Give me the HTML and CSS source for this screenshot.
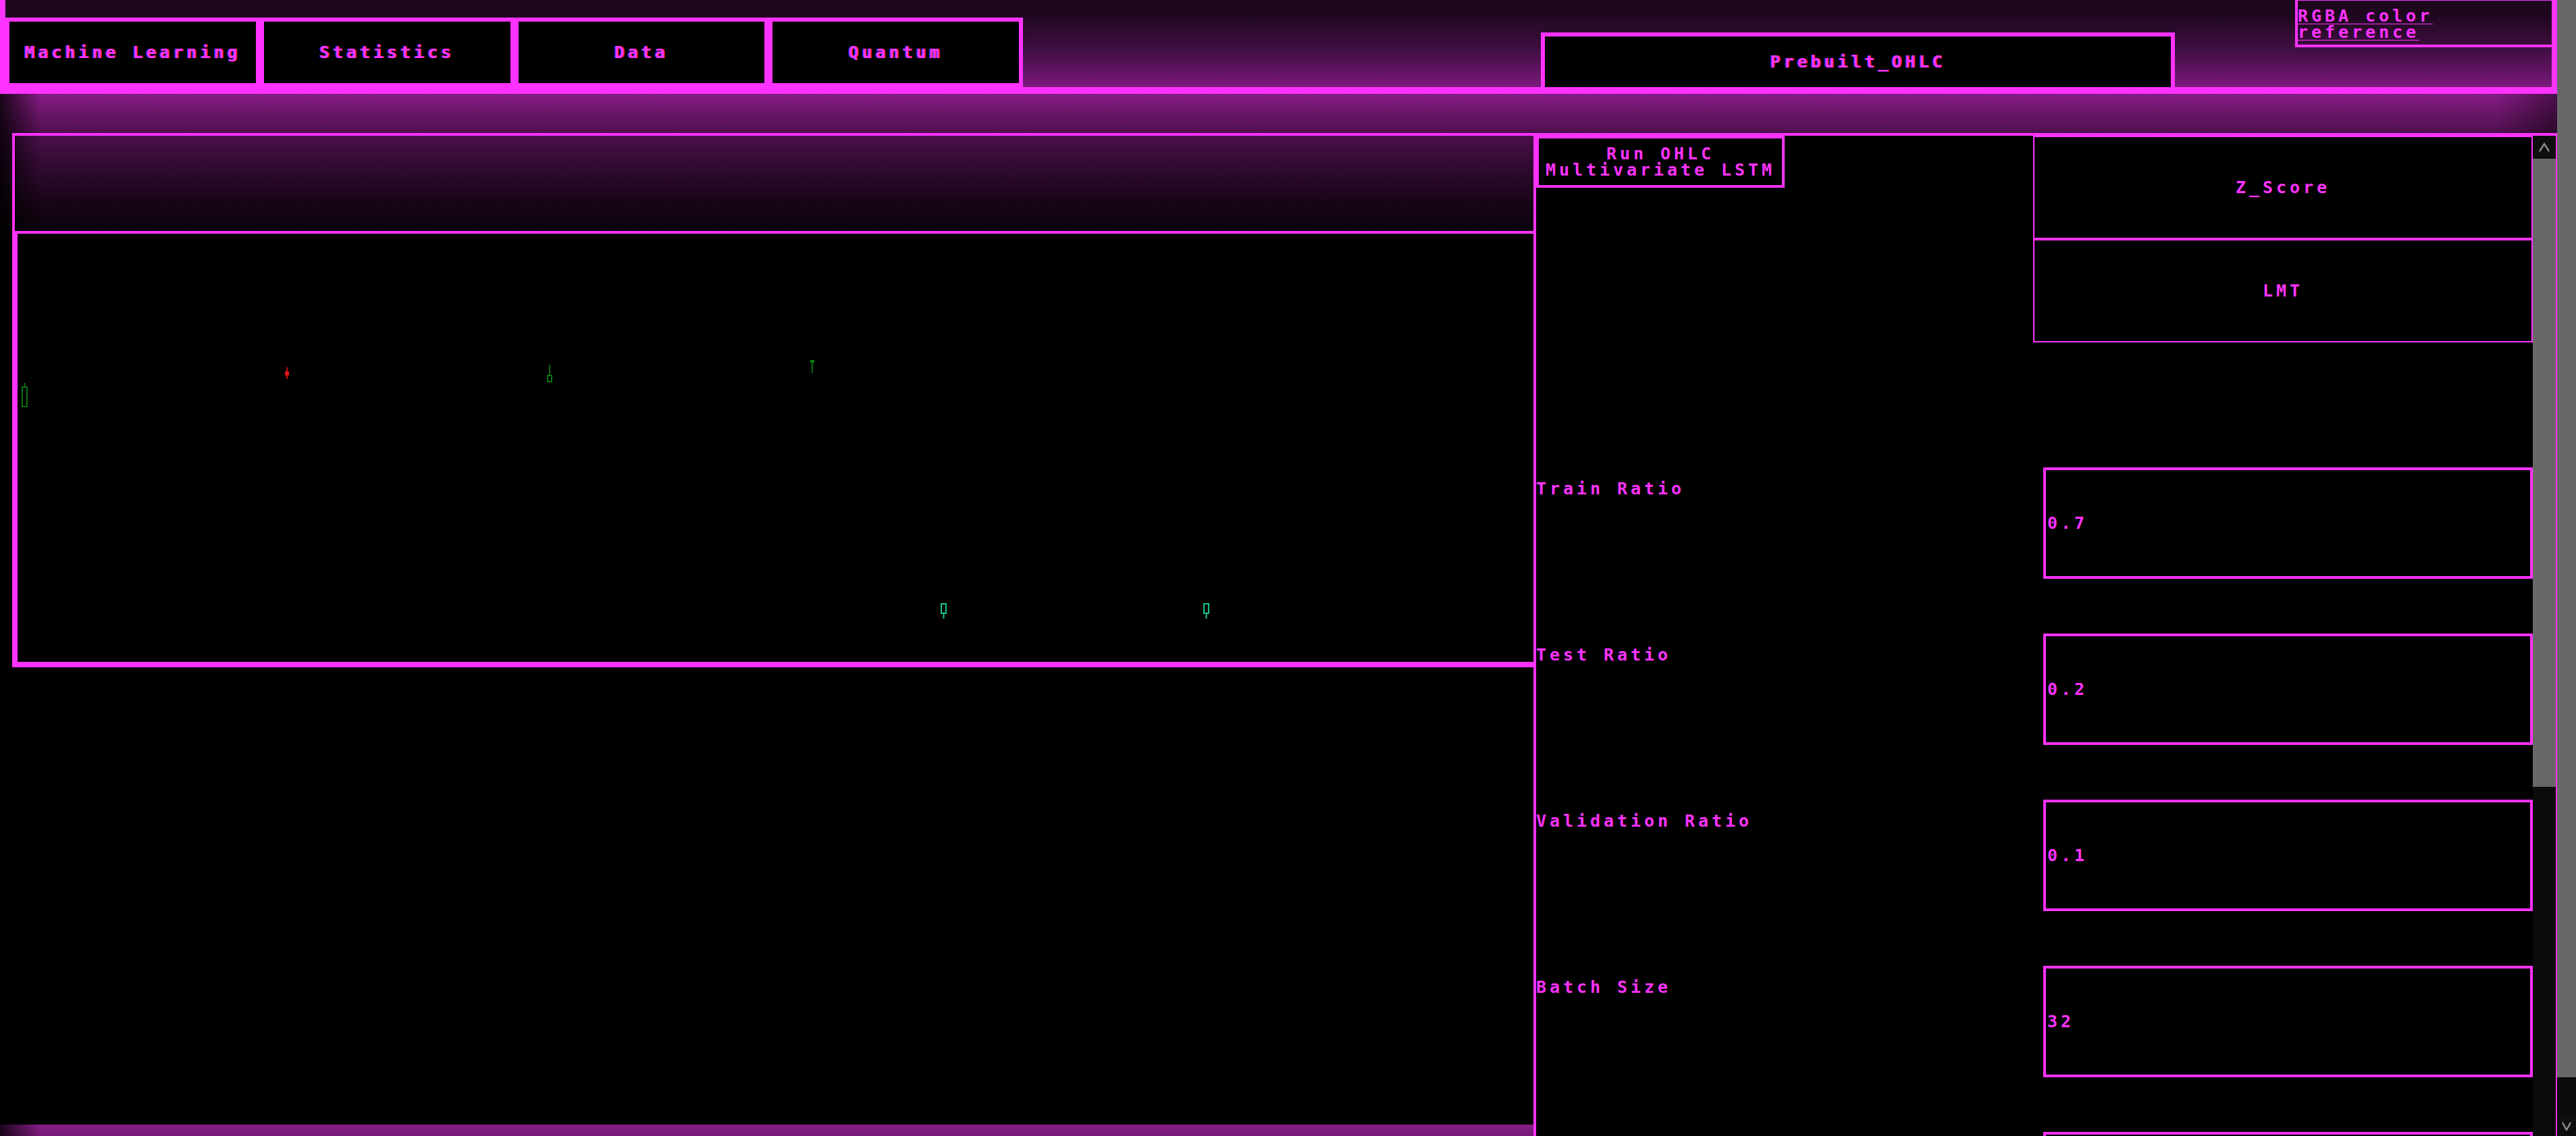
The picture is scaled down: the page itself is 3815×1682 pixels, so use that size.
FILE: index.html
```html
<!DOCTYPE html>
<html lang="en">
<head>
<meta charset="utf-8">
<title>OHLC Workbench</title>
<link rel="stylesheet" href="styles.css">
</head>
<body>
<div class="page">
  <header class="topbar">
    <nav class="tabs">
      <button class="tab">Machine Learning</button>
      <button class="tab">Statistics</button>
      <button class="tab">Data</button>
      <button class="tab">Quantum</button>
    </nav>
    <button class="preset">Prebuilt_OHLC</button>
    <div class="ref-box"><a href="#">RGBA color reference</a></div>
  </header>
  <main class="workspace">
    <section class="chart-panel">
      <div class="chart-head"></div>
      <div class="chart-canvas">
        <svg class="chart" viewBox="0 0 2245 634" width="2245" height="634">
          <g fill="none" stroke="#0c7c14" stroke-width="1.8">
            <line x1="10.5" y1="221" x2="10.5" y2="227"/>
            <rect x="7" y="227" width="7" height="29"/>
            <line x1="788" y1="194" x2="788" y2="210"/>
            <rect x="785" y="210" width="6" height="9"/>
            <line x1="1177" y1="190" x2="1177" y2="206"/>
          </g>
          <rect x="1174" y="187" width="6" height="4" fill="#0c7c14"/>
          <line x1="399" y1="198" x2="399" y2="215" stroke="#e01414" stroke-width="1.8"/>
          <rect x="396" y="204" width="6" height="6" fill="#e01414"/>
          <g fill="none" stroke="#18c48a" stroke-width="2">
            <rect x="1368" y="548" width="7" height="14"/>
            <line x1="1371.5" y1="562" x2="1371.5" y2="570"/>
            <rect x="1757" y="548" width="7" height="14"/>
            <line x1="1760.5" y1="562" x2="1760.5" y2="570"/>
          </g>
        </svg>
      </div>
    </section>
    <aside class="control-panel">
      <div class="panel-body">
        <div class="top-row">
          <button class="run-btn">Run OHLC Multivariate LSTM</button>
          <div class="mode-stack">
            <button class="mode">Z_Score</button>
            <button class="mode">LMT</button>
          </div>
        </div>
        <div class="fields">
          <div class="field"><label>Train Ratio</label><input type="text" value="0.7"></div>
          <div class="field"><label>Test Ratio</label><input type="text" value="0.2"></div>
          <div class="field"><label>Validation Ratio</label><input type="text" value="0.1"></div>
          <div class="field"><label>Batch Size</label><input type="text" value="32"></div>
          <div class="field"><label></label><input type="text" value=""></div>
        </div>
      </div>
      <div class="panel-scroll">
        <div class="sb-btn">
          <svg width="18" height="14" viewBox="0 0 18 14"><polyline points="2,13 9,2 16,13" fill="none" stroke="#8a8a8a" stroke-width="2.5"/></svg>
        </div>
        <div class="sb-thumb inner"></div>
        <div class="sb-track"></div>
      </div>
    </aside>
  </main>
</div>
<div class="page-scroll">
  <div class="sb-thumb outer"></div>
  <div class="sb-track"></div>
  <div class="sb-btn low">
    <svg width="16" height="13" viewBox="0 0 16 13"><polyline points="2,1 8,12 14,1" fill="none" stroke="#8a8a8a" stroke-width="2.5"/></svg>
  </div>
</div>
</body>
</html>
```
FILE: styles.css
```css
* { box-sizing: border-box; }

html, body {
  margin: 0;
  height: 100%;
}

body {
  background: #000;
  overflow: hidden;
  display: flex;
  font-family: "DejaVu Sans Mono", "Liberation Mono", monospace;
  font-weight: bold;
  font-size: 25px;
  line-height: 24px;
  letter-spacing: 4.95px;
  color: #ff33ff;
}

button, input {
  font: inherit;
  letter-spacing: inherit;
  color: inherit;
  margin: 0;
}

button {
  background: #000;
  padding: 0;
  text-align: center;
  line-height: 24px;
  cursor: pointer;
}

.page {
  flex: 1;
  min-width: 0;
  display: flex;
  flex-direction: column;
}

/* ---------- top bar ---------- */
.topbar {
  flex: none;
  height: 139px;
  display: flex;
  align-items: flex-end;
  border-left: 8px solid #ff33ff;
  border-right: 8px solid #ff33ff;
  border-bottom: 10px solid #ff33ff;
  background: linear-gradient(to bottom, #1b0619 0, #1f0820 25px, #2d0b2e 45px, #3d0e40 70px, #561258 95px, #7c1a7e 129px);
}

.tabs {
  display: flex;
  width: 1507px;
  flex: none;
}

.tab {
  flex: 1;
  height: 103px;
  border: 6px solid #ff33ff;
  text-shadow: -1px 0 #3a3aff, 1px 0 #ff2020;
}

.preset {
  flex: none;
  margin-left: 767px;
  width: 939px;
  height: 81px;
  border: 6px solid #ff33ff;
  border-bottom: 0;
  text-shadow: -1px 0 #3a3aff, 1px 0 #ff2020;
}

.ref-box {
  flex: none;
  align-self: flex-start;
  margin-left: auto;
  width: 380px;
  height: 70px;
  border-top: 1px solid #ff33ff;
  border-left: 4px solid #ff33ff;
  border-bottom: 4px solid #ff33ff;
  padding-top: 11px;
}

.ref-box a {
  color: #ff33ff;
  text-decoration: underline;
  text-decoration-thickness: 1px;
  text-underline-offset: 3px;
}

/* ---------- workspace ---------- */
.workspace {
  flex: 1;
  min-height: 0;
  display: flex;
  padding: 58px 0 0 18px;
  background:
    linear-gradient(to right, rgba(0,0,0,.8) 0, rgba(0,0,0,0) 60px),
    linear-gradient(to left, rgba(0,0,0,.45) 0, rgba(0,0,0,0) 90px),
    linear-gradient(to bottom, #881c88 0, #6a1668 29px, #4e104e 58px, #3a0c3a 90px, #260826 130px, #180516 160px, #0b020b 203px, #000 230px, #000 1526px) 0 0 / 100% 1526px repeat-y,
    #000;
}

.chart-panel {
  flex: none;
  align-self: flex-start;
  width: 2253px;
  border-top: 4px solid #ff33ff;
  border-left: 4px solid #ff33ff;
  border-bottom: 8px solid #ff33ff;
}

.chart-head {
  height: 145px;
  border-bottom: 4px solid #ff33ff;
}

.chart-canvas {
  height: 634px;
  border-left: 4px solid #ff33ff;
  background: #000;
  overflow: hidden;
}

.chart {
  display: block;
}

/* ---------- control panel ---------- */
.control-panel {
  flex: 1;
  min-width: 0;
  display: flex;
  background: #000;
  border-top: 4px solid #ff33ff;
  border-left: 4px solid #ff33ff;
  border-right: 2px solid #ff33ff;
  overflow: hidden;
}

.panel-body {
  flex: 1;
  min-width: 0;
  overflow: hidden;
}

.top-row {
  display: flex;
  justify-content: space-between;
  align-items: flex-start;
}

.run-btn {
  width: 368px;
  height: 77px;
  border: 4px solid #ff33ff;
}

.mode-stack {
  width: 740px;
  display: flex;
  flex-direction: column;
}

.mode {
  height: 153px;
  border: 2px solid #ff33ff;
}

.fields {
  display: flex;
  flex-direction: column;
  gap: 81px;
  margin-top: 185px;
}

.field {
  flex: none;
  display: flex;
  justify-content: space-between;
  height: 165px;
}

.field label {
  padding-top: 20px;
}

.field input {
  width: 725px;
  height: 165px;
  border: 4px solid #ff33ff;
  background: #000;
  padding: 0 2px;
  outline: none;
  line-height: normal;
}

/* ---------- scrollbars ---------- */
.panel-scroll {
  flex: none;
  width: 34px;
  display: flex;
  flex-direction: column;
  background: #0b0b0b;
}

.page-scroll {
  flex: none;
  width: 28px;
  display: flex;
  flex-direction: column;
  background: #0b0b0b;
}

.sb-btn {
  flex: none;
  height: 34px;
  display: flex;
  align-items: center;
  justify-content: center;
  background: #0e0e0e;
}

.sb-btn.low {
  height: 30px;
}

.sb-thumb {
  flex: none;
  background: #686868;
}

.sb-thumb.inner { height: 930px; }
.sb-thumb.outer { height: 1595px; }

.sb-track {
  flex: 1;
}
```
